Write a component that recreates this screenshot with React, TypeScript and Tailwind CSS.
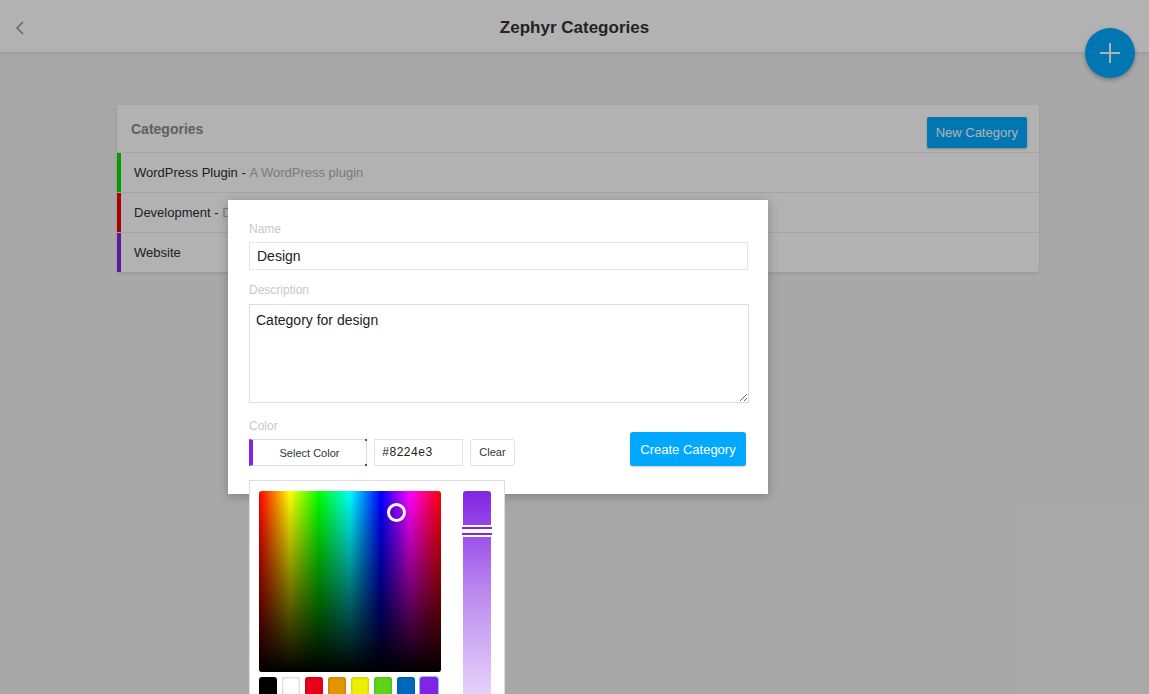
import React from 'react'

type Category = {
  name: string;
  description: string;
  color: string;
}

const categories: Category[] = [
  { name: "WordPress Plugin", description: "A WordPress plugin", color: "#00e000" },
  { name: "Development", description: "Development work", color: "#f20000" },
  { name: "Website", description: "", color: "#8224e3" },
]

const swatches = ["#000000", "#ffffff", "#e8001a", "#e39500", "#eeee00", "#5cd41a", "#0068bb", "#8224e3"]

const ColorPicker = () => {
  return (
    <div className="absolute left-0 top-[41px] w-[256px] h-[240px] bg-white border border-[#dddddd] pt-[10px] pl-[9px] z-20">
      <div className="flex gap-[22px]">
        <div>
          {/* hue / brightness area */}
          <div className="relative w-[182px] h-[181px] rounded-[3px] overflow-hidden bg-[linear-gradient(to_right,#ff0000,#ffff00_17%,#00ff00_33%,#00ffff_50%,#0000ff_67%,#ff00ff_83%,#ff0000)]">
            <div className="absolute inset-0 bg-[linear-gradient(to_bottom,rgba(0,0,0,0),#000000)]" />
            <div className="absolute left-[128px] top-[12px] w-[19px] h-[19px] rounded-full border-[3px] border-white" />
          </div>
          <div className="flex gap-[5px] mt-[5px]">
            {swatches.map((c, i) => (
              <div
                key={c}
                className={
                  i === 1
                    ? "w-[18px] h-[20px] rounded-[3px] shadow-[inset_0_0_3px_rgba(0,0,0,0.35)]"
                    : i === 7
                    ? "w-[18px] h-[20px] rounded-[3px] ring-1 ring-[#6ec6ff]"
                    : "w-[18px] h-[20px] rounded-[3px] shadow-[inset_0_0_3px_rgba(0,0,0,0.25)]"
                }
                style={{ backgroundColor: c }}
              />
            ))}
          </div>
        </div>
        {/* alpha slider */}
        <div className="relative w-[28px] h-[220px]">
          <div className="w-full h-full rounded-[3px] bg-[linear-gradient(to_bottom,#8224e3,rgba(130,36,227,0.55)_45%,rgba(130,36,227,0.15))]" />
          <div className="absolute -left-[1px] -right-[1px] top-[34px] h-[12px] bg-white rounded-[2px] flex flex-col justify-between py-[2px]">
            <div className="h-[2px] bg-[#8224e3]" />
            <div className="h-[2px] bg-[#8224e3]" />
          </div>
        </div>
      </div>
    </div>
  )
}

const App = () => {
  return (
    <div className="relative h-screen w-full overflow-hidden bg-[#f1f1f1] font-['Liberation_Sans',Arial,sans-serif]">
      {/* top bar */}
      <div className="relative h-[53px] bg-white border-b border-[#e4e4e4] shadow-[0_1px_2px_rgba(0,0,0,0.08)] flex items-center justify-center pt-[3px]">
        <svg className="absolute left-[14px] top-[20px]" width="12" height="16" viewBox="0 0 12 16" fill="none">
          <path d="M9 2 L3 8 L9 14" stroke="#999999" strokeWidth="1.6" />
        </svg>
        <h1 className="text-[17px] font-bold text-[#333333]">Zephyr Categories</h1>
      </div>

      <button className="absolute right-[14px] top-[28px] w-[50px] h-[50px] rounded-full bg-[#00abff] shadow-[0_2px_4px_rgba(0,0,0,0.3)] flex items-center justify-center">
        <svg width="22" height="22" viewBox="0 0 22 22">
          <path d="M11 1 V21 M1 11 H21" stroke="#ffffff" strokeWidth="2" />
        </svg>
      </button>

      {/* categories card */}
      <div className="ml-[117px] mt-[52px] w-[922px] bg-white rounded-[2px] shadow-[0_1px_3px_rgba(0,0,0,0.12)]">
        <div className="h-[47px] flex items-start justify-between pl-[14px] pr-[12px]">
          <span className="mt-[14px] text-[14px] font-bold text-[#8a8a8a]">Categories</span>
          <button className="mt-[12px] h-[31px] px-[9px] bg-[#00a9ff] text-white text-[13px] rounded-[2px] shadow-[0_1px_2px_rgba(0,0,0,0.25)]">
            New Category
          </button>
        </div>
        {categories.map((cat) => (
          <div key={cat.name} className="h-[40px] border-t border-[#ececec] flex items-stretch">
            <div className="w-[4px]" style={{ backgroundColor: cat.color }} />
            <div className="flex items-center pl-[13px] text-[13px] text-[#2e2e2e]">
              {cat.name}
              {cat.description && (
                <>
                  &nbsp;-&nbsp;<span className="text-[#b0b0b0]">{cat.description}</span>
                </>
              )}
            </div>
          </div>
        ))}
      </div>

      {/* modal overlay */}
      <div className="absolute inset-0 bg-black/30 z-10" />

      {/* modal */}
      <div className="absolute left-[228px] top-[200px] w-[540px] bg-white shadow-[0_2px_10px_rgba(0,0,0,0.25)] pt-[22px] pb-[28px] px-[21px] z-20">
        <label className="block text-[12px] leading-[14px] text-[#c8c8c8] mb-[6px]">Name</label>
        <input
          className="block w-[499px] h-[28px] border border-[#e5e5e5] px-[7px] text-[14px] text-[#222222] outline-none"
          defaultValue="Design"
        />
        <label className="block text-[12px] leading-[14px] text-[#c8c8c8] mt-[13px] mb-[7px]">Description</label>
        <textarea
          className="block w-[500px] h-[99px] border border-[#dddddd] px-[6px] py-[5px] text-[14px] text-[#222222] outline-none resize-y"
          defaultValue="Category for design"
        />
        <label className="block text-[12px] leading-[14px] text-[#c8c8c8] mt-[16px]">Color</label>
        <div className="flex items-end justify-between -mt-[1px]">
          <div className="relative flex gap-[7px]">
            <button className="relative w-[118px] h-[27px] border border-[#dddddd] border-l-[4px] border-l-[#8224e3] text-[11px] text-[#333333] bg-white pt-[1px]">
              Select Color
              <span className="absolute -right-[1px] -top-[1px] w-[2px] h-[2px] bg-[#8224e3]" />
              <span className="absolute -right-[1px] -bottom-[1px] w-[2px] h-[2px] bg-[#8224e3]" />
            </button>
            <input
              className="w-[89px] h-[27px] border border-[#e2e2e2] px-[7px] text-[12px] text-[#222222] font-['Liberation_Mono',monospace] outline-none"
              defaultValue="#8224e3"
            />
            <button className="w-[45px] h-[27px] border border-[#e2e2e2] rounded-[3px] text-[11px] text-[#333333] bg-white">
              Clear
            </button>
            <ColorPicker />
          </div>
          <button className="mr-[1px] w-[116px] h-[34px] rounded-[3px] bg-[#00a8ff] text-white text-[13px] shadow-[0_1px_2px_rgba(0,0,0,0.2)] pt-[1px]">
            Create Category
          </button>
        </div>
      </div>
    </div>
  )
}

export default App
